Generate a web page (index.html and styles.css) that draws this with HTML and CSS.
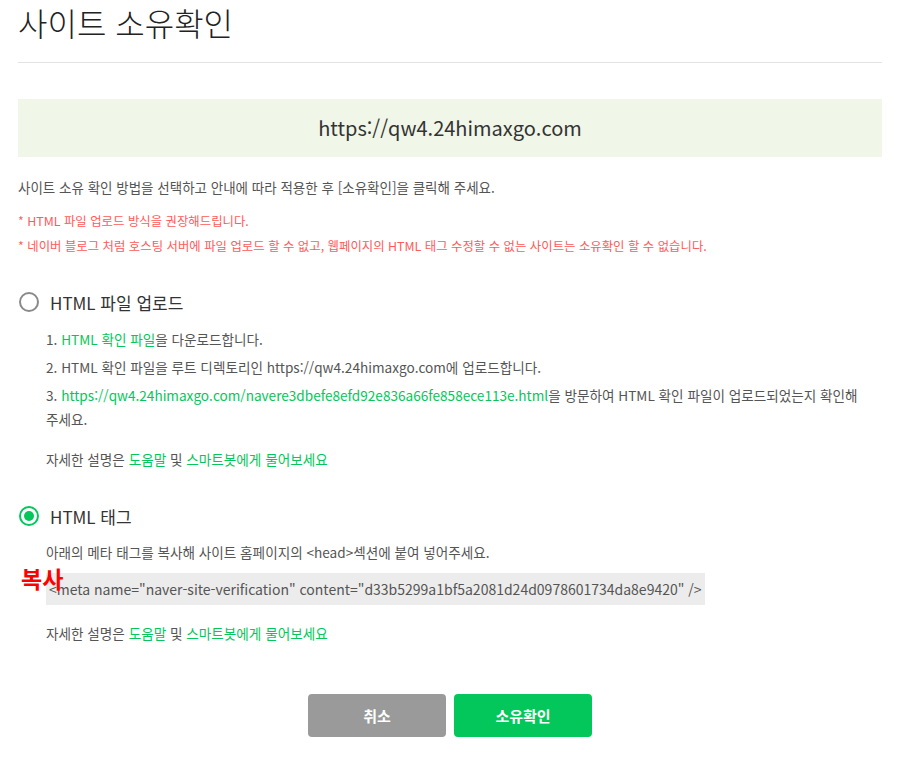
FILE: index.html
```html
<!DOCTYPE html>
<html lang="ko">
<head>
<meta charset="utf-8">
<link rel="stylesheet" href="styles.css">
</head>
<body>
<div class="page">
  <div class="header"><h1 class="title">사이트 소유확인</h1></div>
  <div class="urlbox">https://qw4.24himaxgo.com</div>
  <p class="intro">사이트 소유 확인 방법을 선택하고 안내에 따라 적용한 후 [소유확인]을 클릭해 주세요.</p>
  <div class="notes">
    <p>* HTML 파일 업로드 방식을 권장해드립니다.</p>
    <p>* 네이버 블로그 처럼 호스팅 서버에 파일 업로드 할 수 없고, 웹페이지의 HTML 태그 수정할 수 없는 사이트는 소유확인 할 수 없습니다.</p>
  </div>

  <div class="option first">
    <span class="radio"></span><span class="opt-label">HTML 파일 업로드</span>
  </div>
  <div class="body">
    <ol class="steps">
      <li>1. <a class="link">HTML 확인 파일</a>을 다운로드합니다.</li>
      <li>2. HTML 확인 파일을 루트 디렉토리인 https://qw4.24himaxgo.com에 업로드합니다.</li>
      <li>3. <a class="link">https://qw4.24himaxgo.com/navere3dbefe8efd92e836a66fe858ece113e.html</a>을 방문하여 HTML 확인 파일이 업로드되었는지 확인해 주세요.</li>
    </ol>
    <p class="help">자세한 설명은 <a class="link">도움말</a> 및 <a class="link">스마트봇에게 물어보세요</a></p>
  </div>

  <div class="option second">
    <span class="radio checked"></span><span class="opt-label">HTML 태그</span>
  </div>
  <div class="body">
    <p class="tagdesc">아래의 메타 태그를 복사해 사이트 홈페이지의 &lt;head&gt;섹션에 붙여 넣어주세요.</p>
    <div class="code-row">
      <span class="code">&lt;meta name="naver-site-verification" content="d33b5299a1bf5a2081d24d0978601734da8e9420" /&gt;</span>
      <span class="copy">복사</span>
    </div>
    <p class="help">자세한 설명은 <a class="link">도움말</a> 및 <a class="link">스마트봇에게 물어보세요</a></p>
  </div>

  <div class="buttons">
    <button class="btn cancel">취소</button>
    <button class="btn confirm">소유확인</button>
  </div>
</div>
</body>
</html>
```
FILE: styles.css
```css
* { box-sizing: border-box; }
html, body { margin: 0; padding: 0; background: #fff; }
body {
  font-family: "Noto Sans CJK KR", "Noto Sans", sans-serif;
  color: #555;
  word-break: keep-all;
}
.page { width: 864px; margin-left: 18px; }
p { margin: 0; }
.header { height: 63px; border-bottom: 1px solid #e3e3e3; }
.title {
  margin: 0;
  font-size: 32px;
  line-height: 44px;
  font-weight: 300;
  color: #222;
}
.urlbox {
  margin-top: 36px;
  height: 58px;
  line-height: 58px;
  background: #f0f6e8;
  text-align: center;
  font-size: 20px;
  color: #333;
}
.intro { margin-top: 20px; font-size: 13.5px; line-height: 20px; color: #555; }
.notes { margin-top: 12px; font-size: 12.4px; line-height: 25px; color: #ff5a5a; }
.option { display: flex; align-items: center; height: 24px; }
.option.first { margin-top: 31px; }
.option.second { margin-top: 33px; }
.radio {
  width: 20px; height: 20px; border-radius: 50%;
  border: 2px solid #8a8a8a;
  margin-left: 1px; margin-right: 11px;
  display: flex; align-items: center; justify-content: center;
}
.radio.checked { border-color: #03c75a; }
.radio.checked::after {
  content: ""; width: 10px; height: 10px; border-radius: 50%; background: #03c75a;
}
.opt-label { font-size: 17px; color: #333; }
.body { padding-left: 28px; font-size: 13.6px; line-height: 24px; }
.steps { list-style: none; margin: 13px 0 0; padding: 0; }
.steps li + li { margin-top: 4px; }
.link { color: #03c75a; text-decoration: none; }
.help { margin-top: 16px; }
.tagdesc { margin-top: 12px; }
.code-row { position: relative; margin-top: 9px; }
.code {
  display: inline-block;
  background: #ececec;
  height: 32px;
  line-height: 32px;
  padding: 0 3px;
  font-size: 14px;
  color: #555;
}
.copy {
  position: absolute;
  left: -25px; top: -10px;
  font-size: 23px;
  font-weight: 700;
  color: #f00;
  line-height: 30px;
}
.buttons {
  margin-top: 49px;
  display: flex;
  justify-content: center;
  gap: 8px;
}
.btn {
  width: 138px; height: 43px;
  border: 0; border-radius: 4px;
  font-family: inherit;
  font-size: 15px; font-weight: 700;
  color: #fff;
}
.cancel { background: #9a9a9a; }
.confirm { background: #03c75a; }
```
